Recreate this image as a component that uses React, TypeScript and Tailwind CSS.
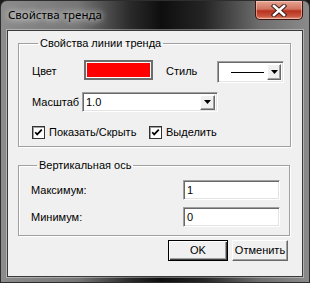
const ui = "font-['Liberation_Sans',Arial,sans-serif] text-[11px] leading-[13px] text-black";

const Sunken = "border-t border-l border-t-[#a0a0a0] border-l-[#a0a0a0] border-b border-r border-b-white border-r-white shadow-[inset_1px_1px_0_#696969,inset_-1px_-1px_0_#e3e3e3] bg-white";

const Raised = "bg-[#f0f0f0] border-t border-l border-t-white border-l-white border-b border-r border-b-[#696969] border-r-[#696969] shadow-[inset_-1px_-1px_0_#a0a0a0]";

function DropButton({ w = 16, h = 16 }: { w?: number; h?: number }) {
  return (
    <div className={`${Raised} flex items-center justify-center`} style={{ width: w, height: h }}>
      <svg width="7" height="4" viewBox="0 0 7 4">
        <path d="M0 0h7L3.5 4z" fill="#000" />
      </svg>
    </div>
  );
}

function CheckBox({ label }: { label: string }) {
  return (
    <div className="flex items-center gap-[4px]">
      <div className="w-[13px] h-[13px] border border-[#333] bg-white shadow-[inset_1px_1px_0_#a0a0a0] flex items-center justify-center">
        <svg width="9" height="9" viewBox="0 0 9 9">
          <path d="M1.2 4.2l2 2.2L7.8 1.6" stroke="#000" strokeWidth="1.7" fill="none" />
        </svg>
      </div>
      <span>{label}</span>
    </div>
  );
}

export default function App() {
  return (
    <div className="w-[310px] h-[283px] bg-[#1b1b1b] overflow-hidden">
      <div className="w-[310px] h-[283px] rounded-t-[7px] border border-[#2e2e2e] bg-[linear-gradient(90deg,#8c8c8c_0%,#767676_25%,#2a2a2a_42%,#0e0e0e_52%,#252525_66%,#6e6e6e_84%,#8a8a8a_100%)] flex flex-col">
        <div className="h-[29px] flex items-start justify-between">
          <div className="pl-[7px] pt-[6px] font-['Noto_Sans','Liberation_Sans',sans-serif] text-[11.5px] leading-[16px] text-black [text-shadow:0_0_6px_rgba(255,255,255,0.9),0_0_10px_rgba(255,255,255,0.7)]">
            Свойства тренда
          </div>
          <div className="mr-[6px] w-[48px] h-[19px] rounded-b-[5px] border border-t-0 border-[#3d1410] bg-[linear-gradient(180deg,#e6a593_0%,#d17461_45%,#b8321e_55%,#c9553f_85%,#e49a80_100%)] shadow-[inset_0_0_0_1px_rgba(255,220,210,0.5)] flex items-center justify-center">
            <svg width="16" height="13" viewBox="0 0 16 13">
              <path d="M3 2l10 9M13 2L3 11" stroke="#3a1a18" strokeWidth="4.4" strokeLinecap="square" />
              <path d="M3 2l10 9M13 2L3 11" stroke="#fff" strokeWidth="2.6" strokeLinecap="square" />
            </svg>
          </div>
        </div>
        <div className={`${ui} ml-[6px] w-[296px] h-[247px] border border-[#3a3a3a] bg-[#f0f0f0] shadow-[0_0_0_1px_rgba(255,255,255,0.35)] flex flex-col pt-[6px] pl-[10px]`}>
          <fieldset className="w-[273px] border border-[#a0a0a0] shadow-[inset_1px_1px_0_#fff,1px_1px_0_#fff] pl-[13px] pb-[7px]">
            <legend className="ml-[6px] px-[2px] text-black">Свойства линии тренда</legend>
            <div className="mt-[10px] flex items-start h-[23px]">
              <span className="mt-[5px] w-[52px]">Цвет</span>
              <div className="w-[69px] h-[20px] border-2 border-[#6d6d6d] p-[1px] bg-white">
                <div className="w-full h-full bg-[#ff0000]" />
              </div>
              <span className="mt-[5px] ml-[13px] w-[51px]">Стиль</span>
              <div className={`${Sunken} mt-[1px] w-[67px] h-[22px] flex items-center pl-[13px] pr-[2px]`}>
                <div className="w-[33px] h-[1px] bg-black" />
                <div className="ml-auto">
                  <DropButton w={14} h={16} />
                </div>
              </div>
            </div>
            <div className="mt-[9px] flex items-center h-[20px]">
              <span className="w-[50px]">Масштаб</span>
              <div className={`${Sunken} w-[136px] h-[20px] flex items-center pl-[3px] pr-[2px]`}>
                <span>1.0</span>
                <div className="ml-auto">
                  <DropButton w={15} h={15} />
                </div>
              </div>
            </div>
            <div className="mt-[14px] flex items-center h-[13px]">
              <div className="w-[117px]">
                <CheckBox label="Показать/Скрыть" />
              </div>
              <CheckBox label="Выделить" />
            </div>
          </fieldset>
          <fieldset className="mt-[12px] w-[272px] border border-[#a0a0a0] shadow-[inset_1px_1px_0_#fff,1px_1px_0_#fff] pl-[12px] pb-[8px]">
            <legend className="ml-[6px] px-[2px]">Вертикальная ось</legend>
            <div className="mt-[8px] flex items-center h-[20px]">
              <span className="w-[152px]">Максимум:</span>
              <div className={`${Sunken} w-[97px] h-[20px] flex items-center pl-[3px]`}>1</div>
            </div>
            <div className="mt-[7px] flex items-center h-[20px]">
              <span className="w-[152px]">Минимум:</span>
              <div className={`${Sunken} w-[97px] h-[20px] flex items-center pl-[3px]`}>0</div>
            </div>
          </fieldset>
          <div className="mt-[4px] flex justify-end gap-[4px] pr-[14px]">
            <button className="w-[60px] h-[21px] border border-black bg-[#f0f0f0] shadow-[inset_1px_1px_0_#fff,inset_-1px_-1px_0_#404040,inset_-2px_-2px_0_#a0a0a0] flex items-center justify-center">
              OK
            </button>
            <button className={`${Raised} w-[56px] h-[21px] flex items-center justify-center`}>
              Отменить
            </button>
          </div>
        </div>
      </div>
    </div>
  );
}
